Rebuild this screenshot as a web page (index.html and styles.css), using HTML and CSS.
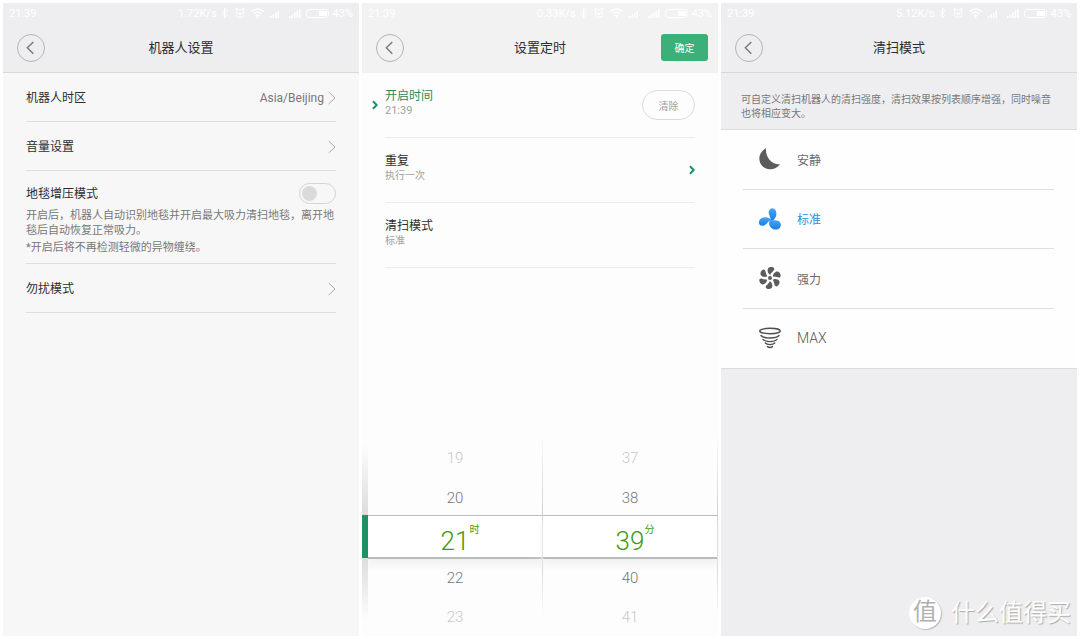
FILE: index.html
```
<!DOCTYPE html>
<html lang="zh-CN">
<head>
<meta charset="utf-8">
<meta name="viewport" content="width=device-width, initial-scale=1">
<title>机器人设置</title>
<link rel="stylesheet" href="styles.css">
</head>
<body>
<svg class="sprite" aria-hidden="true">
  <symbol id="status" viewBox="0 0 109 12">
    <g fill="none" stroke="#fff" stroke-width="1">
      <path d="M2 3.500l5 5-2.500 2.500v-10l2.500 2.500-5 5"/>
      <circle cx="20" cy="6.500" r="4"/>
      <path d="M18 5.500l2 2 2.500-2M15.500 3l2-2M24.500 3l-2-2" stroke-width="1.300"/>
      <path d="M31.500 4.500q6-5 12 0M33.500 6.800q4-3.200 8 0M35.500 9q2-1.600 4 0" stroke-width="1.300"/>
      <rect x="86.500" y="2.500" width="22" height="8" rx="3"/>
    </g>
    <g fill="#fff">
      <circle cx="37.500" cy="10.200" r="1"/>
      <path d="M50 9h1.500v2H50zM52.500 7.500H54V11h-1.500zM55 6h1.500v5H55zM57.500 4H59v7h-1.500zM69 9h1.500v2H69zM71.500 7.500H73V11h-1.500zM74 5.500h1.500V11H74zM76.500 3.500H78V11h-1.500zM79 2h1.500v9H79z"/>
      <rect x="99" y="4" width="8" height="5"/>
    </g>
  </symbol>
  <symbol id="back" viewBox="0 0 28 28"><path d="M16.500 7.500L10 13.800l6.500 6.300" fill="none" stroke="#77777a" stroke-width="1.500"/></symbol>
  <symbol id="chevron" viewBox="0 0 8 14"><path d="M.7 1l6.300 6-6.300 6" fill="none" stroke="#aaa" stroke-width="1"/></symbol>
  <symbol id="mark" viewBox="0 0 6 10"><path d="M1 1.200L4.700 5 1 8.800" fill="none" stroke="#14935f" stroke-width="2"/></symbol>
</svg>

<main class="screens">
  <section class="screen screen-settings">
    <header class="head head-line">
      <div class="status"><span>21:39</span><span class="speed">1.72K/s</span><svg class="status-icons" aria-hidden="true"><use href="#status"/></svg><span>43%</span></div>
      <div class="bar">
        <button class="back" aria-label="返回"><svg><use href="#back"/></svg></button>
        <h1>机器人设置</h1>
      </div>
    </header>
    <div class="settings">
      <button class="setting"><span class="name">机器人时区</span><span class="value">Asia/Beijing</span><svg class="chevron"><use href="#chevron"/></svg></button>
      <button class="setting"><span class="name">音量设置</span><svg class="chevron"><use href="#chevron"/></svg></button>
      <div class="setting-block">
        <div class="setting-top">
          <label class="name" for="carpet">地毯增压模式</label>
          <input class="switch" id="carpet" type="checkbox" role="switch">
        </div>
        <p>开启后，机器人自动识别地毯并开启最大吸力清扫地毯，离开地毯后自动恢复正常吸力。</p>
        <p class="note">*开启后将不再检测轻微的异物缠绕。</p>
      </div>
      <button class="setting"><span class="name">勿扰模式</span><svg class="chevron"><use href="#chevron"/></svg></button>
    </div>
  </section>

  <section class="screen screen-timer">
    <header class="head">
      <div class="status"><span>21:39</span><span class="speed">0.33K/s</span><svg class="status-icons" aria-hidden="true"><use href="#status"/></svg><span>43%</span></div>
      <div class="bar">
        <button class="back" aria-label="返回"><svg><use href="#back"/></svg></button>
        <h1>设置定时</h1>
        <button class="confirm">确定</button>
      </div>
    </header>
    <div class="timer-rows">
      <div class="timer-row active">
        <svg class="mark mark-left"><use href="#mark"/></svg>
        <div class="timer-text"><h2>开启时间</h2><p>21:39</p></div>
        <button class="clear">清除</button>
      </div>
      <div class="timer-row">
        <div class="timer-text"><h2>重复</h2><p>执行一次</p></div>
        <svg class="mark"><use href="#mark"/></svg>
      </div>
      <div class="timer-row">
        <div class="timer-text"><h2>清扫模式</h2><p>标准</p></div>
      </div>
    </div>
    <div class="picker">
      <div class="rail"><span class="rail-mark"></span></div>
      <div class="wheel" role="listbox" aria-label="时">
        <span class="far before-far" role="option">19</span>
        <span class="before" role="option">20</span>
        <span class="picked" role="option" aria-selected="true">21<sup>时</sup></span>
        <span role="option">22</span>
        <span class="far" role="option">23</span>
      </div>
      <div class="wheel" role="listbox" aria-label="分">
        <span class="far before-far" role="option">37</span>
        <span class="before" role="option">38</span>
        <span class="picked" role="option" aria-selected="true">39<sup>分</sup></span>
        <span role="option">40</span>
        <span class="far" role="option">41</span>
      </div>
    </div>
  </section>

  <section class="screen screen-mode">
    <header class="head head-line">
      <div class="status"><span>21:39</span><span class="speed">5.12K/s</span><svg class="status-icons" aria-hidden="true"><use href="#status"/></svg><span>43%</span></div>
      <div class="bar">
        <button class="back" aria-label="返回"><svg><use href="#back"/></svg></button>
        <h1>清扫模式</h1>
      </div>
    </header>
    <p class="intro">可自定义清扫机器人的清扫强度，清扫效果按列表顺序增强，同时噪音也将相应变大。</p>
    <div class="modes">
      <button class="mode">
        <svg viewBox="0 0 24 24"><path d="M8 1C3.500 4 1.300 7.500 1.300 11.500c0 6 4.700 10.700 10.700 10.700 4 0 8-2 10-5C14.500 18 7 11 8 1z" fill="#5c5c5e"/></svg>
        <span>安静</span>
      </button>
      <button class="mode chosen">
        <svg viewBox="0 0 24 24">
          <defs><linearGradient id="blade" x1="0" y1="0" x2="0" y2="1"><stop offset="0" stop-color="#45a8fb"/><stop offset="1" stop-color="#1b7ce0"/></linearGradient></defs>
          <g fill="url(#blade)">
            <path d="M12 14C14 11 10 8 10.800 4.300c1.200-4 5.900-4 7.200 0 1.200 4-.5 8-4.500 10z"/>
            <path d="M12.500 13.500c-2-.500-3.500 4-6.500 5-3.500 1.200-6.200-1.500-4.700-5 2-3.700 7-4.500 11.200-1.500z"/>
            <path d="M12.200 12.500c2 1.700 5.300-.2 8.300 1.500 3.500 2 3 6.800-.5 8.200-4.500 1.600-8.500-1.500-9.200-6.500z"/>
          </g>
        </svg>
        <span>标准</span>
      </button>
      <button class="mode">
        <svg viewBox="0 0 24 24">
          <g fill="#5c5c5e">
            <circle cx="12" cy="12" r="2"/>
            <path id="petal" d="M12.200 8.800C9.800 7.500 8.900 4 10.200 2.200c1.200-1.600 5-1.700 6 .3.700 2-2.500 3-4 6.300z"/>
            <use href="#petal" transform="rotate(60 12 12)"/>
            <use href="#petal" transform="rotate(120 12 12)"/>
            <use href="#petal" transform="rotate(180 12 12)"/>
            <use href="#petal" transform="rotate(240 12 12)"/>
            <use href="#petal" transform="rotate(300 12 12)"/>
          </g>
        </svg>
        <span>强力</span>
      </button>
      <button class="mode">
        <svg viewBox="0 0 24 24">
          <g fill="none" stroke="#505052" stroke-width="1.400" stroke-linecap="round">
            <ellipse cx="12" cy="5" rx="10.300" ry="2.700"/>
            <path d="M3 9.500c3 3.300 15 3.300 18 0M5 13.400c2.500 2.900 11.500 2.900 14 0M7.300 17c2 2.100 7.400 2.100 9.400 0M9.500 20.500c1.200 1.300 3.800 1.300 5 0"/>
          </g>
        </svg>
        <span>MAX</span>
      </button>
    </div>
  </section>
</main>
<div class="watermark"><span class="seal">值</span><span>什么值得买</span></div>
</body>
</html>
```
FILE: styles.css
```
* { box-sizing: border-box; }
body {
  margin: 0;
  background: #fff;
  font-family: Roboto, "Noto Sans CJK SC", sans-serif;
  color: #2c2c2e;
}
h1, h2, p { margin: 0; font-weight: 400; }
button {
  margin: 0;
  padding: 0;
  border: 0;
  background: none;
  font: inherit;
  color: inherit;
  text-align: left;
}
.sprite { display: none; }
.screens {
  display: grid;
  grid-template-columns: repeat(3, 1fr);
  gap: 3px;
  min-height: 100vh;
  padding: 3px;
}
.screen { display: flex; flex-direction: column; min-width: 0; }
.screen-settings { background: #f7f7f7; }
.screen-timer { background: #fdfdfd; }
.screen-mode { background: #eeeef0; }

.head { background: #eeeef0; height: 70px; }
.screen-timer .head { background: #f2f2f2; }
.head-line { border-bottom: 1px solid #d8d8da; }
.status {
  display: flex;
  align-items: center;
  height: 20px;
  padding: 0 6px;
  font-size: 11px;
  color: #fff;
}
.speed { margin-left: auto; }
.status-icons { width: 109px; height: 12px; margin: 0 4px 0 3px; }
.bar {
  display: grid;
  grid-template-columns: 1fr auto 1fr;
  align-items: center;
  height: 49px;
  padding: 0 10px;
}
.bar h1 { font-size: 13px; line-height: 20px; }
.back {
  width: 28px;
  height: 28px;
  margin-left: 4px;
  border: 1px solid #b4b4b6;
  border-radius: 50%;
}
.back svg { display: block; width: 26px; height: 26px; }
.confirm {
  justify-self: end;
  width: 47px;
  height: 27px;
  border-radius: 3px;
  background: #3cb079;
  color: #fff;
  font-size: 10px;
  text-align: center;
}

.settings { padding: 0 23px; }
.setting {
  display: flex;
  align-items: center;
  width: 100%;
  height: 49px;
  padding-top: 2px;
  border-bottom: 1px solid #dedede;
}
.name { font-size: 12px; line-height: 18px; margin-right: auto; }
.value { font-size: 12px; color: #77777a; margin-right: 4px; }
.chevron { width: 8px; height: 14px; }
.setting-block {
  padding: 12px 0 8px;
  border-bottom: 1px solid #dedede;
  font-size: 11px;
  line-height: 15px;
  color: #77777a;
}
.setting-top { display: flex; align-items: center; margin-bottom: 4px; color: #2c2c2e; }
.note { padding-top: 2px; line-height: 15px; }
.switch {
  appearance: none;
  display: flex;
  align-items: center;
  width: 37px;
  height: 21px;
  margin: 0;
  padding: 0 2px;
  border: 1px solid #d4d4d4;
  border-radius: 11px;
}
.switch::before {
  content: "";
  width: 15px;
  height: 15px;
  border-radius: 50%;
  background: #dadada;
}
.switch:checked { justify-content: flex-end; }

.timer-row {
  display: flex;
  align-items: center;
  height: 65px;
  margin: 0 23px;
  border-bottom: 1px solid #ebebeb;
}
.timer-text { flex: 1; padding-bottom: 4px; }
.timer-text h2 { font-size: 12px; line-height: 16px; }
.timer-text p { font-size: 10px; line-height: 14px; color: #a0a0a0; }
.timer-row.active h2 { color: #2a8a60; }
.timer-row.active p { font-size: 11px; }
.mark { width: 6px; height: 10px; }
.mark-left { margin: 0 7px 0 -13px; }
.clear {
  width: 53px;
  height: 30px;
  border: 1px solid #dcdcdc;
  border-radius: 15px;
  font-size: 10px;
  text-align: center;
  color: #a0a0a0;
}

.picker {
  display: flex;
  margin-top: auto;
}
.rail {
  position: relative;
  z-index: 1;
  display: flex;
  align-items: flex-end;
  width: 6px;
  background: linear-gradient(#fdfdfd 4%, #dedede 38%, #dedede 62%, #fdfdfd 92%);
}
.rail-mark { width: 6px; height: 43px; margin-bottom: 78px; background: #1f9162; }
.wheel {
  flex: 1;
  display: flex;
  flex-direction: column;
  border-right: 1px solid;
  border-image: linear-gradient(#fdfdfd, #cfcfcf 40%, #cfcfcf 60%, #fdfdfd 90%) 1;
  font-size: 15px;
  font-weight: 300;
  line-height: 39px;
  color: #77777a;
  text-align: center;
}
.wheel .far { color: #c8c8c8; line-height: 38px; }
.wheel .before { line-height: 34px; }
.wheel .before-far { line-height: 45px; }
.wheel .picked {
  display: flex;
  justify-content: center;
  height: 44px;
  border: solid #b9bdb9;
  border-width: 1px 0 2px;
  background: #fff;
  box-shadow: 0 6px 8px #f0f0f0;
  font-size: 26px;
  line-height: 50px;
  color: #3f9c0c;
}
.wheel sup {
  width: 10px;
  margin: 0 -10px 0 0;
  font-size: 10px;
  font-weight: 400;
  line-height: 28px;
  vertical-align: baseline;
}

.intro {
  padding: 20px 20px 8px;
  font-size: 10px;
  line-height: 14px;
  color: #77777a;
}
.modes { background: #fefefe; border: solid #dcdcde; border-width: 1px 0; }
.mode {
  display: flex;
  align-items: center;
  width: 100%;
  height: 60px;
  padding: 0 0 2px 37px;
  font-size: 12px;
  color: #6a6a6c;
  background: linear-gradient(#dfdfdf, #dfdfdf) no-repeat 22px 100%;
  background-size: calc(100% - 45px) 1px;
}
.mode:nth-child(even) { height: 59px; }
.mode:last-child { background: none; font-size: 14px; font-weight: 300; color: #555; }
.mode svg { width: 24px; height: 24px; margin-right: 15px; }
.mode.chosen { color: #2c93e0; }

.watermark {
  position: absolute;
  right: 9px;
  bottom: 9px;
  display: flex;
  align-items: center;
  gap: 10px;
  font-size: 24px;
  line-height: 34px;
  color: #fff;
  text-shadow: 1px 1px 1px #aaa;
}
.seal {
  width: 32px;
  height: 32px;
  border-radius: 50%;
  background: #fff;
  box-shadow: 1px 1px 1px #bbb;
  color: #b0b0b0;
  text-align: center;
  line-height: 30px;
  text-shadow: none;
}
```
